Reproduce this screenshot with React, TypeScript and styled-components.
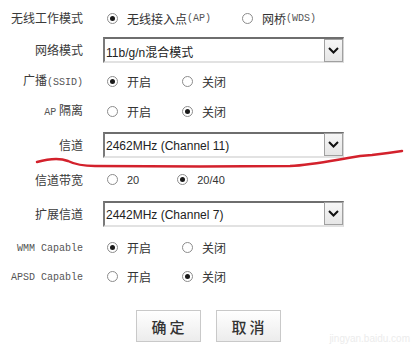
import styled, { createGlobalStyle } from 'styled-components'

const GlobalStyle = createGlobalStyle`
    body {
        margin: 0;
        background: #fff;
        font-family: "Noto Sans CJK SC", "Liberation Sans", sans-serif;
        color: #333;
    }
`

const Page = styled('div')`
    position: relative;
    width: 414px;
    height: 350px;
    padding-top: 2px;
    box-sizing: border-box;
    overflow: hidden;
`

const Form = styled('div')`
    display: flex;
    flex-direction: column;
`

const Row = styled('div')<{ $h: number }>`
    display: flex;
    align-items: center;
    height: ${p => p.$h}px;
`

const Label = styled('div')`
    width: 83px;
    flex: none;
    text-align: right;
    font-size: 12px;
    line-height: 14px;
    color: #3a3a3a;
    white-space: nowrap;
`

const Field = styled('div')`
    margin-left: 20px;
    display: flex;
    align-items: center;
`

const Mono = styled('span')`
    font-family: "Liberation Mono", monospace;
    font-size: 10px;
    color: #555;
`

const Option = styled('label')<{ $gap?: number }>`
    display: flex;
    align-items: center;
    margin-left: 4px;
    margin-right: ${p => p.$gap ?? 27}px;
    font-size: 12px;
    color: #333;
    white-space: nowrap;
`

const Radio = styled('span')<{ $on?: boolean }>`
    width: 11px;
    height: 11px;
    box-sizing: border-box;
    border: 1px solid #8c8c8c;
    border-radius: 50%;
    background: #fff;
    margin-right: 9px;
    display: flex;
    align-items: center;
    justify-content: center;

    &::after {
        content: '';
        width: 5px;
        height: 5px;
        border-radius: 50%;
        background: ${p => (p.$on ? '#1a1a1a' : 'transparent')};
    }
`

const Num = styled('span')`
    font-family: "Liberation Sans", sans-serif;
    font-size: 11px;
    color: #333;
`

const Select = styled('div')`
    width: 241px;
    height: 26px;
    box-sizing: border-box;
    border-top: 2px solid #6e6e6e;
    border-left: 2px solid #7a7a7a;
    border-right: 1px solid #d6d6d6;
    border-bottom: 2px solid #e2e2e2;
    display: flex;
    align-items: center;
    justify-content: space-between;
    padding-left: 1px;
    padding-top: 3px;
    font-family: "Liberation Sans", "Noto Sans CJK SC", sans-serif;
    font-size: 12px;
    color: #222;
    background: #fff;
`

const Arrow = styled('div')`
    width: 19px;
    height: 23px;
    margin-top: -3px;
    box-sizing: border-box;
    border: 1px solid #a0a0a0;
    background: linear-gradient(#f6f6f6, #e6e6e6);
    display: flex;
    align-items: center;
    justify-content: center;
`

const Buttons = styled('div')`
    display: flex;
    justify-content: center;
    gap: 15px;
    margin-top: 21px;
    padding-left: 2px;
`

const Button = styled('button')`
    width: 65px;
    height: 32px;
    border: 1px solid #c9c9c9;
    background: linear-gradient(#ffffff, #ececec);
    font-family: "Noto Sans CJK SC", sans-serif;
    font-size: 15px;
    font-weight: 500;
    color: #333;
    letter-spacing: 3px;
    padding: 0 0 0 3px;
`

const Scribble = styled('svg')`
    position: absolute;
    left: 0;
    top: 0;
    pointer-events: none;
`

const Watermark = styled('div')`
    position: absolute;
    right: 4px;
    bottom: 6px;
    font-family: "Liberation Sans", sans-serif;
    font-size: 10px;
    color: #ececec;
`

function Chevron() {
    return (
        <svg width="11" height="7" viewBox="0 0 11 7">
            <path d="M1 1 L5.5 5.5 L10 1" fill="none" stroke="#111" strokeWidth="2" />
        </svg>
    )
}

type Opt = { on?: boolean; text: React.ReactNode; gap?: number }

function Radios({ options }: { options: Opt[] }) {
    return (
        <Field>
            {options.map((o, i) => (
                <Option key={i} $gap={o.gap}>
                    <Radio $on={o.on} />
                    {o.text}
                </Option>
            ))}
        </Field>
    )
}

function Dropdown({ value }: { value: string }) {
    return (
        <Field>
            <Select>
                <span>{value}</span>
                <Arrow>
                    <Chevron />
                </Arrow>
            </Select>
        </Field>
    )
}

const onOff = (on: boolean): Opt[] => [
    { on, text: '开启' },
    { on: !on, text: '关闭' },
]

export default function App() {
    return (
        <Page>
            <GlobalStyle />
            <Form>
                <Row $h={32}>
                    <Label>无线工作模式</Label>
                    <Radios
                        options={[
                            { on: true, text: <>无线接入点<Mono>(AP)</Mono></>, gap: 27 },
                            { text: <>网桥<Mono>(WDS)</Mono></> },
                        ]}
                    />
                </Row>
                <Row $h={32}>
                    <Label>网络模式</Label>
                    <Dropdown value="11b/g/n混合模式" />
                </Row>
                <Row $h={30}>
                    <Label>广播<Mono>(SSID)</Mono></Label>
                    <Radios options={onOff(true)} />
                </Row>
                <Row $h={31}>
                    <Label><Mono>AP</Mono> 隔离</Label>
                    <Radios options={onOff(false)} />
                </Row>
                <Row $h={35}>
                    <Label>信道</Label>
                    <Dropdown value="2462MHz (Channel 11)" />
                </Row>
                <Row $h={35}>
                    <Label>信道带宽</Label>
                    <Radios
                        options={[
                            { text: <Num>20</Num>, gap: 34 },
                            { on: true, text: <Num>20/40</Num> },
                        ]}
                    />
                </Row>
                <Row $h={33}>
                    <Label>扩展信道</Label>
                    <Dropdown value="2442MHz (Channel 7)" />
                </Row>
                <Row $h={34}>
                    <Label><Mono>WMM Capable</Mono></Label>
                    <Radios options={onOff(true)} />
                </Row>
                <Row $h={25}>
                    <Label><Mono>APSD Capable</Mono></Label>
                    <Radios options={onOff(false)} />
                </Row>
            </Form>
            <Buttons>
                <Button>确定</Button>
                <Button>取消</Button>
            </Buttons>
            <Watermark>jingyan.baidu.com</Watermark>
            <Scribble width="414" height="350" viewBox="0 0 414 350">
                <path
                    d="M37 162 C 48 159, 60 158, 68 161 C 74 164, 80 166, 95 166 L 200 166.5 L 290 166 C 310 165, 330 161, 348 158 L 360 156 L 372 155 L 388 153 L 402 151"
                    fill="none"
                    stroke="#d3212c"
                    strokeWidth="2.5"
                    strokeLinecap="round"
                />
            </Scribble>
        </Page>
    )
}
